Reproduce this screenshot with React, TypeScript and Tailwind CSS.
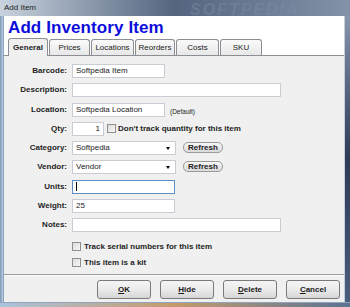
import React from "react";

const font = "font-['Liberation_Sans',Arial,sans-serif]";

function Label({ text }: { text: string }) {
  return (
    <div className="w-[64px] shrink-0 pr-[1px] text-right text-[8px] font-bold leading-[14px] text-[#1e1e1e]">
      {text}
    </div>
  );
}

function TextBox({
  width,
  value,
  alignRight,
  focused,
}: {
  width: string;
  value?: string;
  alignRight?: boolean;
  focused?: boolean;
}) {
  return (
    <div
      className={`${width} h-[14px] shrink-0 bg-white border px-[3px] text-[8px] leading-[12px] text-[#222] flex items-center ${
        focused ? "border-[#5b8fc5]" : "border-[#c9ccd2]"
      } ${alignRight ? "justify-end" : ""}`}
    >
      {focused && <div className="h-[9px] w-px bg-black" />}
      {value}
    </div>
  );
}

function Select({ value }: { value: string }) {
  return (
    <div className="w-[104px] h-[14px] shrink-0 bg-white border border-[#c9ccd2] pl-[3px] pr-[5px] text-[8px] leading-[12px] text-[#222] flex items-center justify-between">
      <span>{value}</span>
      <span className="w-0 h-0 border-l-[2.5px] border-r-[2.5px] border-t-[3px] border-l-transparent border-r-transparent border-t-black mt-[1px]" />
    </div>
  );
}

function Refresh() {
  return (
    <div className="ml-[3px] w-[40px] h-[11px] mt-[1px] rounded-[5px] border border-[#9a9a9a] bg-gradient-to-b from-[#f6f6f6] to-[#dadada] text-[8px] font-bold leading-[9px] text-[#222] flex items-center justify-center">
      Refresh
    </div>
  );
}

function Check() {
  return (
    <div className="w-[9px] h-[9px] shrink-0 border border-[#8f8f8f] bg-gradient-to-br from-[#dcdcdc] to-[#f7f7f7]" />
  );
}

function Row({ children }: { children: React.ReactNode }) {
  return <div className="h-[19.25px] flex items-start gap-[4px]">{children}</div>;
}

function Tab({ label, width, active }: { label: string; width: string; active?: boolean }) {
  return (
    <div
      className={`${width} shrink-0 border border-b-0 border-[#8c8e94] rounded-t-[3px] text-[8px] text-center text-[#222] ${
        active
          ? "h-[18px] bg-[#f0f0f0] font-bold leading-[17px] relative z-10 -mb-px pb-px"
          : "h-[16px] bg-gradient-to-b from-[#fafafa] to-[#e8e8e8] leading-[15px]"
      }`}
    >
      {label}
    </div>
  );
}

function Btn({ first, rest }: { first: string; rest: string }) {
  return (
    <div className="w-[54px] h-[19px] rounded-[3px] border border-[#7a7a7a] bg-gradient-to-b from-[#f4f4f4] via-[#ebebeb] to-[#d6d6d6] text-[8px] font-bold text-[#1a1a1a] flex items-center justify-center">
      <span className="underline">{first}</span>
      {rest}
    </div>
  );
}

export default function App() {
  return (
    <div className={`${font} w-[350px] h-[307px] overflow-hidden flex flex-col bg-[#9fb3c9]`}>
      {/* title bar */}
      <div className="h-[16px] shrink-0 relative bg-gradient-to-r from-[#c9d3de] via-[#55657f] to-[#8392a8] flex items-center pl-[4px]">
        <span className="text-[8px] text-[#222]">Add Item</span>
        <span className="absolute left-[190px] top-[-2px] text-[16px] font-bold italic tracking-[2px] text-[#7e8ea8] opacity-40">
          SOFTPEDIA
        </span>
      </div>

      <div className="flex h-[286px] shrink-0">
        {/* left frame */}
        <div className="w-[4px] shrink-0 bg-gradient-to-r from-[#7f95b3] to-[#bcd0e6] border-r border-[#8fa3bb]" />

        {/* client */}
        <div className="w-[340px] shrink-0 flex flex-col bg-[#f0f0f0]">
          <div className="bg-white">
            <div className="h-[21px] pl-[4px] pt-[2px] text-[17px] font-bold leading-[19px] text-[#0d0ddb] tracking-[0.1px]">
              Add Inventory Item
            </div>
            <div className="h-[18px] flex items-end pl-[4px] gap-[1px]">
              <Tab label="General" width="w-[40px]" active />
              <Tab label="Prices" width="w-[41px]" />
              <Tab label="Locations" width="w-[43px]" />
              <Tab label="Reorders" width="w-[40px]" />
              <Tab label="Costs" width="w-[43px]" />
              <Tab label="SKU" width="w-[42px]" />
            </div>
          </div>

          {/* tab panel */}
          <div className="h-[219px] shrink-0 border-t border-[#8c8e94] pt-[8px] text-[8px]">
            <Row>
              <Label text="Barcode:" />
              <TextBox width="w-[93px]" value="Softpedia Item" />
            </Row>
            <Row>
              <Label text="Description:" />
              <TextBox width="w-[209px]" />
            </Row>
            <Row>
              <Label text="Location:" />
              <TextBox width="w-[93px]" value="Softpedia Location" />
              <span className="text-[6.5px] leading-[6.5px] mt-[6px] ml-[1px] text-[#222]">(Default)</span>
            </Row>
            <Row>
              <Label text="Qty:" />
              <TextBox width="w-[32px]" value="1" alignRight />
              <div className="flex items-center h-[14px] gap-[2px] -ml-[1px]">
                <Check />
                <span className="font-bold text-[8px] text-[#1e1e1e]">Don't track quantity for this item</span>
              </div>
            </Row>
            <Row>
              <Label text="Category:" />
              <Select value="Softpedia" />
              <Refresh />
            </Row>
            <Row>
              <Label text="Vendor:" />
              <Select value="Vendor" />
              <Refresh />
            </Row>
            <Row>
              <Label text="Units:" />
              <TextBox width="w-[103px]" focused />
            </Row>
            <Row>
              <Label text="Weight:" />
              <TextBox width="w-[103px]" value="25" />
            </Row>
            <Row>
              <Label text="Notes:" />
              <TextBox width="w-[209px]" />
            </Row>
            <div className="pl-[68px] pt-[5px] flex flex-col gap-[7px]">
              <div className="flex items-center gap-[3px] h-[9px]">
                <Check />
                <span className="font-bold text-[#1e1e1e]">Track serial numbers for this item</span>
              </div>
              <div className="flex items-center gap-[3px] h-[9px]">
                <Check />
                <span className="font-bold text-[#1e1e1e]">This item is a kit</span>
              </div>
            </div>
          </div>

          <div className="h-[2px] shrink-0 border-t border-[#9a9a9a] border-b border-b-[#fdfdfd]" />

          {/* buttons */}
          <div className="flex-1 flex items-start pt-[4px] pl-[93px] gap-[9px]">
            <Btn first="O" rest="K" />
            <Btn first="H" rest="ide" />
            <Btn first="D" rest="elete" />
            <Btn first="C" rest="ancel" />
          </div>
        </div>

        {/* right frame */}
        <div className="w-[6px] shrink-0 border-l border-[#c4cfdb] bg-gradient-to-b from-[#8696ad] via-[#2d3b56] to-[#4a5e7c]" />
      </div>

      {/* bottom frame */}
      <div className="h-[5px] shrink-0 bg-gradient-to-r from-[#a9c3dd] via-[#c49a6a] to-[#5b7392] border-t border-[#8fa3bb]" />
    </div>
  );
}
